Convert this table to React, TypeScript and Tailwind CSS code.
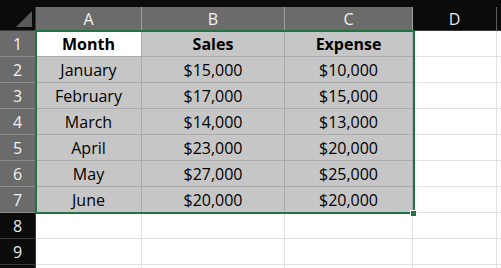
const cols = [
  { key: "A", w: "w-[106px]" },
  { key: "B", w: "w-[143px]" },
  { key: "C", w: "w-[128px]" },
];

const rows = [
  ["Month", "Sales", "Expense"],
  ["January", "$15,000", "$10,000"],
  ["February", "$17,000", "$15,000"],
  ["March", "$14,000", "$13,000"],
  ["April", "$23,000", "$20,000"],
  ["May", "$27,000", "$25,000"],
  ["June", "$20,000", "$20,000"],
];

function EmptyRow({ n }: { n?: number }) {
  return (
    <div className="flex h-[26px]">
      <div className="w-[36px] shrink-0 bg-[#0b0b0b] border-r border-b border-[#3a3a3a] text-[#e8e8e8] flex items-center justify-center">
        {n}
      </div>
      {cols.map((c) => (
        <div key={c.key} className={`${c.w} shrink-0 bg-white border-r border-b border-[#e1e1e1]`} />
      ))}
      <div className="w-[84px] shrink-0 bg-white border-r border-b border-[#e1e1e1]" />
      <div className="flex-1 bg-white border-b border-[#e1e1e1]" />
    </div>
  );
}

export default function App() {
  return (
    <div
      className="relative w-[501px] h-[268px] overflow-hidden bg-white text-[16px] leading-none"
      style={{ fontFamily: '"Open Sans", "Liberation Sans", sans-serif' }}
    >
      <div className="h-[7px] bg-[#0b0b0b]" />
      {/* column headers */}
      <div className="flex h-[24px]">
        <div className="relative w-[36px] shrink-0 bg-[#0b0b0b] border-r border-b border-[#3a3a3a]">
          <div className="absolute right-[3px] bottom-[3px] w-0 h-0 border-l-[16px] border-l-transparent border-b-[16px] border-b-[#5a5a5a]" />
        </div>
        {cols.map((c) => (
          <div
            key={c.key}
            className={`${c.w} shrink-0 bg-[#6b6b6b] border-r border-[#a0a0a0] border-b border-b-[#3a3a3a] text-[#f2f2f2] flex items-center justify-center`}
          >
            {c.key}
          </div>
        ))}
        <div className="w-[84px] shrink-0 bg-[#0b0b0b] border-r border-[#5a5a5a] border-b border-b-[#3a3a3a] text-[#e8e8e8] flex items-center justify-center">
          D
        </div>
        <div className="flex-1 bg-[#0b0b0b] border-b border-[#3a3a3a]" />
      </div>

      {rows.map((r, i) => (
        <div key={i} className="flex h-[26px]">
          <div className="w-[36px] shrink-0 bg-[#6b6b6b] border-r border-[#3a3a3a] border-b border-b-[#8a8a8a] text-[#f2f2f2] flex items-center justify-center">
            {i + 1}
          </div>
          {cols.map((c, j) => (
            <div
              key={c.key}
              className={`${c.w} shrink-0 border-r border-b border-[#ababab] flex items-center justify-center text-black ${
                i === 0 && j === 0 ? "bg-white" : "bg-[#c6c6c6]"
              } ${i === 0 ? "font-bold" : ""}`}
            >
              {r[j]}
            </div>
          ))}
          <div className="w-[84px] shrink-0 bg-white border-r border-b border-[#e1e1e1]" />
          <div className="flex-1 bg-white border-b border-[#e1e1e1]" />
        </div>
      ))}
      <EmptyRow n={8} />
      <EmptyRow n={9} />
      <EmptyRow />

      {/* selection outline */}
      <div className="absolute left-[35px] top-[30px] w-[380px] h-[184px] border-2 border-[#217346]" />
      <div className="absolute left-[410px] top-[210px] w-[7px] h-[7px] bg-[#217346] border border-white" />
    </div>
  );
}
